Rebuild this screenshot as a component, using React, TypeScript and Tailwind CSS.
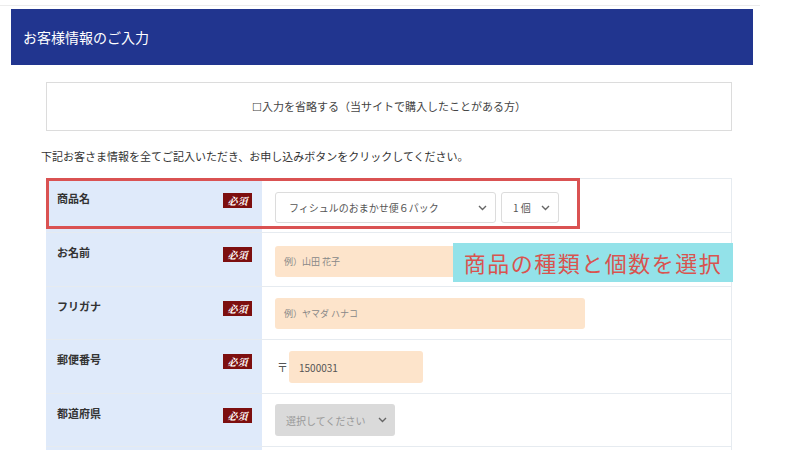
import React from "react";

const font = { fontFamily: '"Noto Sans CJK JP", "Noto Sans", sans-serif' };

function Chevron() {
  return (
    <svg width="9" height="6" viewBox="0 0 9 6" fill="none">
      <path d="M1 1l3.5 3.5L8 1" stroke="#666" strokeWidth="1.4" />
    </svg>
  );
}

function Badge() {
  return (
    <div
      className="flex h-[15px] w-[29px] items-center justify-center bg-[#7d0f0f] text-[10px] font-bold italic leading-none text-white"
      style={{ fontFamily: '"Noto Serif CJK JP", "Noto Sans CJK JP", serif' }}
    >
      必須
    </div>
  );
}

function Row({
  label,
  children,
  h = "h-[54px]",
  pt = "pt-[13px]",
}: {
  label: string;
  children: React.ReactNode;
  h?: string;
  pt?: string;
}) {
  return (
    <div className={`flex ${h} border-b border-[#e6ebf0]`}>
      <div className="flex w-[216px] shrink-0 items-start justify-between bg-[#dfeafa] pl-[11px] pr-[10px] pt-[11px]">
        <span className="text-[11px] font-bold text-[#333]">{label}</span>
        <div className="mt-[3px]">
          <Badge />
        </div>
      </div>
      <div className={`flex flex-1 items-start pl-[13px] ${pt}`}>{children}</div>
    </div>
  );
}

export default function App() {
  return (
    <div className="relative h-[450px] w-[800px] overflow-hidden bg-white" style={font}>
      <div className="ml-0 h-[6px] w-[760px] border-b border-[#ececec]" />
      <div className="ml-[11px] mt-[3px] flex h-[56px] w-[742px] items-center bg-[#21358f] pl-[12px]">
        <span className="text-[14px] text-white">お客様情報のご入力</span>
      </div>
      <div className="ml-[46px] mt-[17px] flex h-[49px] w-[686px] items-center justify-center border border-[#dcdcdc]">
        <span className="text-[11px] text-[#444]">☐入力を省略する（当サイトで購入したことがある方）</span>
      </div>
      <div className="ml-[41px] mt-[17px] text-[11px] leading-[16px] text-[#333]">
        下記お客さま情報を全てご記入いただき、お申し込みボタンをクリックしてください。
      </div>
      <div className="relative ml-[46px] mt-[14px] w-[686px] border-r border-t border-[#e6ebf0]">
        <Row label="商品名">
          <div className="flex gap-[5px]">
            <div className="flex h-[31px] w-[221px] items-center justify-between rounded-[3px] border border-[#dcdcdc] bg-white pl-[13px] pr-[8px]">
              <span className="text-[10px] text-[#555]">フィシュルのおまかせ便６パック</span>
              <Chevron />
            </div>
            <div className="flex h-[31px] w-[58px] items-center justify-between rounded-[3px] border border-[#dcdcdc] bg-white pl-[11px] pr-[8px]">
              <span className="text-[10px] text-[#555]">1&nbsp;個</span>
              <Chevron />
            </div>
          </div>
        </Row>
        <Row label="お名前">
          <div className="flex h-[31px] w-[310px] items-center rounded-[3px] bg-[#fde4cb] pl-[9px]">
            <span className="text-[9px] text-[#888]">例）山田 花子</span>
          </div>
        </Row>
        <Row label="フリガナ" h="h-[53px]" pt="pt-[11px]">
          <div className="flex h-[31px] w-[310px] items-center rounded-[3px] bg-[#fde4cb] pl-[9px]">
            <span className="text-[9px] text-[#888]">例）ヤマダ ハナコ</span>
          </div>
        </Row>
        <Row label="郵便番号" pt="pt-[11px]">
          <div className="flex items-center">
            <span className="w-[14px] pl-[2px] text-[11px] text-[#555]">〒</span>
            <div className="flex h-[32px] w-[134px] items-center rounded-[3px] bg-[#fde4cb] pl-[10px]">
              <span className="text-[10px] text-[#555]">1500031</span>
            </div>
          </div>
        </Row>
        <Row label="都道府県" h="h-[53px]" pt="pt-[10px]">
          <div className="flex h-[32px] w-[120px] items-center justify-between rounded-[3px] bg-[#dadada] pl-[11px] pr-[8px]">
            <span className="text-[10px] text-[#999]">選択してください</span>
            <Chevron />
          </div>
        </Row>
        <div className="h-[10px] w-[216px] bg-[#dfeafa]" />

        <div className="pointer-events-none absolute left-0 top-[-1px] h-[51px] w-[534px] border-[3px] border-[#da5252]" />
        <div className="absolute left-[407px] top-[64px] flex h-[39px] w-[280px] items-center justify-center bg-[#93e2e9]">
          <span className="text-[22px] tracking-[1.5px] text-[#d9534f]">商品の種類と個数を選択</span>
        </div>
      </div>
    </div>
  );
}
